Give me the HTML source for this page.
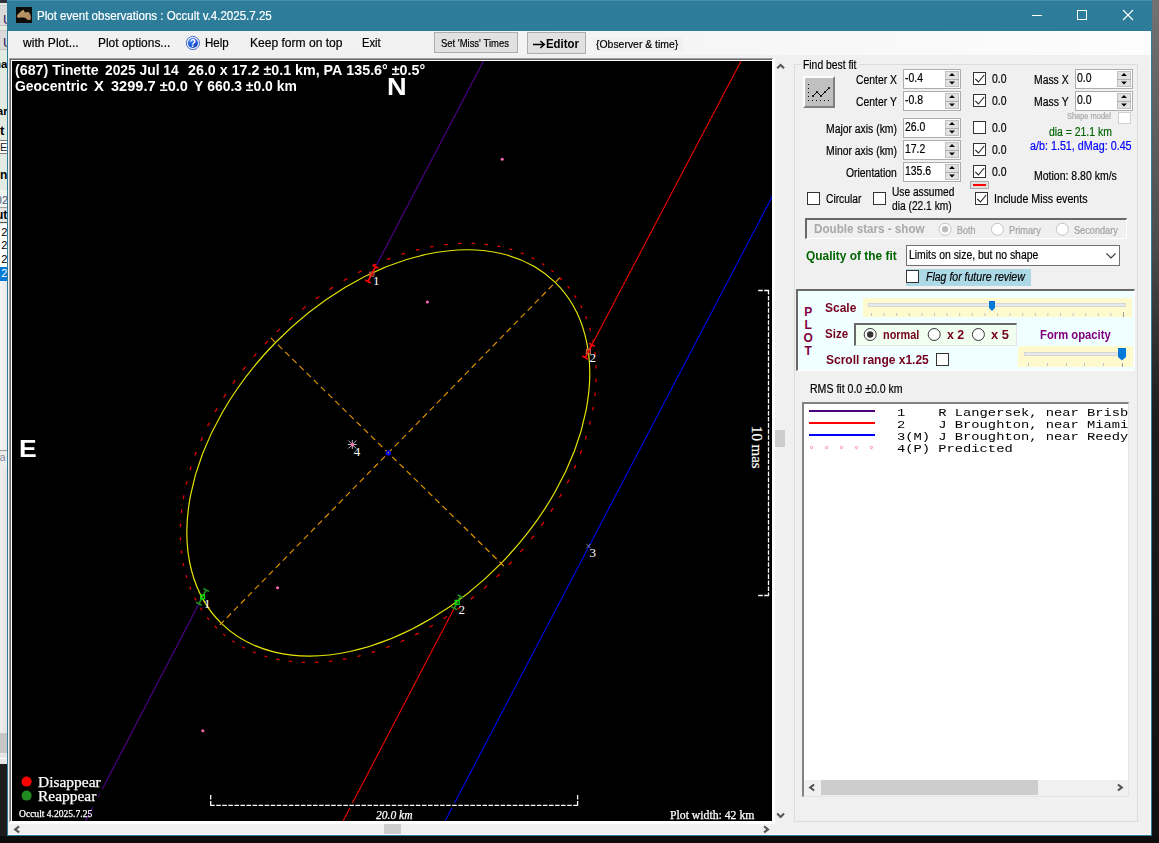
<!DOCTYPE html>
<html><head><meta charset="utf-8"><title>Plot event observations</title>
<style>
html,body{margin:0;padding:0;}
body{width:1159px;height:843px;overflow:hidden;background:#0c0c0c;position:relative;font-family:"Liberation Sans",sans-serif;}
.a{position:absolute;box-sizing:border-box;}
.t{position:absolute;white-space:nowrap;}
svg{position:absolute;left:0;top:0;overflow:visible;}
</style></head><body>
<div class="a" style="left:0px;top:0px;width:7px;height:843px;background:#e2ebe2;overflow:hidden;"><div class="a" style="left:0;top:0px;width:8px;height:3px;background:#30343a;"></div><div class="a" style="left:0;top:5px;width:8px;height:21px;background:#dadada;border-top:1px solid #c8c8c8;border-bottom:1px solid #c0c0c0;"></div><div class="a" style="left:0;top:30px;width:8px;height:20px;background:#dadada;border-top:1px solid #c8c8c8;border-bottom:1px solid #c0c0c0;"></div><span class='t' style="left:3.11px;top:10.50px;font:13px/17px 'Liberation Sans',sans-serif;color:#2a1a5a">U</span><span class='t' style="left:3.11px;top:33.50px;font:13px/17px 'Liberation Sans',sans-serif;color:#2a1a5a">U</span><span class='t' style="left:-6.02px;top:57.02px;font:bold 11.5px/15px 'Liberation Sans',sans-serif;color:#000">ha</span><span class='t' style="left:-3.27px;top:104.22px;font:bold 11.5px/15px 'Liberation Sans',sans-serif;color:#000">ar</span><span class='t' style="left:-0.13px;top:122.00px;font:bold 13px/17px 'Liberation Sans',sans-serif;color:#000">t</span><div class="a" style="left:0;top:140px;width:8px;height:14px;background:#fff;border-top:1px solid #7a7a7a;border-bottom:1px solid #7a7a7a;"></div><span class='t' style="left:-0.04px;top:140.19px;font:11px/15px 'Liberation Sans',sans-serif;color:#222">E</span><span class='t' style="left:0.07px;top:166.84px;font:bold 12px/16px 'Liberation Sans',sans-serif;color:#000">n</span><div class="a" style="left:0;top:190px;width:8px;height:18px;background:#f0f3ee;"></div><span class='t' style="left:-4.23px;top:192.69px;font:11px/15px 'Liberation Sans',sans-serif;color:#4a5878">02</span><div class="a" style="left:0;top:207px;width:8px;height:16px;background:#e6e6e6;border-top:1px solid #a0a0a0;border-bottom:1px solid #555;"></div><span class='t' style="left:-4.03px;top:207.24px;font:bold 12px/16px 'Liberation Sans',sans-serif;color:#000">ut</span><div class="a" style="left:0;top:224px;width:8px;height:43px;background:#fff;"></div><span class='t' style="left:1.18px;top:224.99px;font:11px/15px 'Liberation Sans',sans-serif;color:#000">2</span><span class='t' style="left:1.18px;top:238.49px;font:11px/15px 'Liberation Sans',sans-serif;color:#000">2</span><span class='t' style="left:1.18px;top:251.89px;font:11px/15px 'Liberation Sans',sans-serif;color:#000">2</span><div class="a" style="left:0;top:266.5px;width:8px;height:14.5px;background:#0078d7;"></div><span class='t' style="left:1.18px;top:266.19px;font:11px/15px 'Liberation Sans',sans-serif;color:#fff">2</span><div class="a" style="left:0;top:281px;width:8px;height:452px;background:linear-gradient(90deg,#f4f4f4,#e9e9e9);"></div><div class="a" style="left:0;top:449.5px;width:8px;height:1px;background:#9a9a9a;"></div><div class="a" style="left:0;top:450.5px;width:8px;height:16px;background:#ececec;"></div><span class='t' style="left:-0.62px;top:450.49px;font:11px/15px 'Liberation Sans',sans-serif;color:#8a8aa0">a</span><div class="a" style="left:0;top:466.5px;width:8px;height:267px;background:linear-gradient(90deg,#eeeeee,#e2e2e2);"></div><div class="a" style="left:0;top:733px;width:8px;height:20px;background:#c6c6c6;"></div><div class="a" style="left:0;top:753px;width:8px;height:11px;background:#e6e6e6;"></div><div class="a" style="left:0;top:757.5px;width:8px;height:1px;background:#fff;"></div><div class="a" style="left:0;top:764px;width:8px;height:80px;background:#1c1c1c;"></div></div>
<div class="a" style="left:7px;top:0px;width:1145px;height:836px;background:#f0f0f0;border:1px solid #2d7d9a;border-top:none;"></div>
<div class="a" style="left:7px;top:0px;width:1145px;height:31px;background:#2d7d9a;"></div>
<div class="a" style="left:1152px;top:0px;width:7px;height:843px;background:linear-gradient(180deg,#727272 0px,#646464 90px,#5a5a5a 160px,#4a4a4a 250px,#333 330px,#1c1c1c 420px,#101010 843px);"></div>
<div class="a" style="left:0px;top:836px;width:1159px;height:7px;background:#0d0d0d;"></div>
<div class="a" style="left:1150px;top:31px;width:1px;height:804px;background:#fafafa;"></div>
<div class="a" style="left:8px;top:834px;width:1143px;height:1px;background:#fafafa;"></div>
<div class="a" style="left:7px;top:0px;width:1145px;height:1px;background:#4a8faa;"></div>
<div class="a" style="left:16px;top:7px;width:16px;height:16px;background:#0e0c08;"></div>
<svg width="1159" height="843"><defs><filter id="ib" x="-20%" y="-20%" width="140%" height="140%"><feGaussianBlur stdDeviation="0.35"/></filter><linearGradient id="ig" x1="0" y1="0" x2="1" y2="1"><stop offset="0" stop-color="#c29c6c"/><stop offset="1" stop-color="#a88458"/></linearGradient></defs><path filter="url(#ib)" fill="url(#ig)" d="M16.9 16.3 C17.1 15.3 17.4 14.9 17.8 14.4 C18.8 13.3 19.7 12.6 20.6 11.8 C21.2 11.2 21.8 10.6 22.4 10.2 C22.9 9.9 23.4 9.9 23.7 10.1 C24.1 10.5 24.2 11.1 24.4 11.6 C24.7 12.1 25.1 12.6 25.6 12.6 C26.2 12.5 26.8 12.0 27.4 11.9 C28.0 11.8 28.6 12.0 29.0 12.4 C29.6 13.0 30.0 13.7 30.3 14.5 C30.6 15.5 30.8 16.5 30.9 17.6 C30.95 18.3 30.9 19.0 30.6 19.4 C30.2 19.9 29.6 20.1 29.0 20.0 C28.3 19.9 27.7 19.7 27.1 19.4 C26.5 19.0 26.1 18.5 25.6 18.1 C25.0 17.6 24.3 17.45 23.5 17.45 C22.5 17.45 21.6 17.55 20.6 17.6 C19.8 17.7 19.0 17.9 18.3 17.8 C17.6 17.7 16.9 17.2 16.9 16.3Z"/></svg>
<span class="t" style="left:37.20px;top:9.00px;font:12px/14px 'Liberation Sans',sans-serif;color:#fff;transform-origin:0 0;transform:scaleX(0.9626);-webkit-text-stroke:0.2px #fff;">Plot&nbsp;event&nbsp;observations&nbsp;:&nbsp;Occult&nbsp;v.4.2025.7.25</span>
<svg width="1159" height="843" shape-rendering="crispEdges"><path d="M1032 15.5h10" stroke="#fff" fill="none"/><rect x="1077.5" y="10.5" width="9" height="9" stroke="#fff" fill="none"/></svg>
<svg width="1159" height="843"><path d="M1123 10l10 10M1133 10l-10 10" stroke="#fff" stroke-width="1.1" fill="none"/></svg>
<div class="a" style="left:8px;top:31px;width:1143px;height:24px;background:linear-gradient(90deg,#f0f0f0 0%,#f2f2f2 40%,#fdfdfd 100%);"></div>
<span class="t" style="left:23.00px;top:36.00px;font:12px/14px 'Liberation Sans',sans-serif;color:#000;transform-origin:0 0;transform:scaleX(1.0063);-webkit-text-stroke:0.2px #000;">with&nbsp;Plot...</span>
<span class="t" style="left:98.20px;top:36.00px;font:12px/14px 'Liberation Sans',sans-serif;color:#000;transform-origin:0 0;transform:scaleX(0.9944);-webkit-text-stroke:0.2px #000;">Plot&nbsp;options...</span>
<span class="t" style="left:204.50px;top:36.00px;font:12px/14px 'Liberation Sans',sans-serif;color:#000;transform-origin:0 0;transform:scaleX(0.9603);-webkit-text-stroke:0.2px #000;">Help</span>
<span class="t" style="left:250.00px;top:36.00px;font:12px/14px 'Liberation Sans',sans-serif;color:#000;transform-origin:0 0;transform:scaleX(1.0048);-webkit-text-stroke:0.2px #000;">Keep&nbsp;form&nbsp;on&nbsp;top</span>
<span class="t" style="left:362.00px;top:36.00px;font:12px/14px 'Liberation Sans',sans-serif;color:#000;transform-origin:0 0;transform:scaleX(0.9348);-webkit-text-stroke:0.2px #000;">Exit</span>
<svg width="1159" height="843"><defs><linearGradient id="hg" x1="0.2" y1="0" x2="0.8" y2="1"><stop offset="0" stop-color="#5a90f8"/><stop offset="0.5" stop-color="#2460e0"/><stop offset="1" stop-color="#0c3cb0"/></linearGradient></defs><circle cx="192.9" cy="43" r="6.6" fill="#eef2fc" stroke="#3a60c0" stroke-width="0.9"/><circle cx="192.9" cy="43" r="5.1" fill="url(#hg)"/><text x="192.9" y="46.6" font-family="Liberation Sans" font-weight="bold" font-size="10" fill="#fff" text-anchor="middle">?</text></svg>
<div class="a" style="left:434px;top:32px;width:84px;height:21px;background:#e1e1e1;border:1px solid #adadad;"></div>
<span class="t" style="left:440.70px;top:37.00px;font:10.5px/12px 'Liberation Sans',sans-serif;color:#000;transform-origin:0 0;transform:scaleX(0.9017);-webkit-text-stroke:0.2px #000;">Set&nbsp;'Miss'&nbsp;Times</span>
<div class="a" style="left:527px;top:32px;width:59px;height:22px;background:#e1e1e1;border:1px solid #adadad;"></div>
<span class="t" style="left:545.60px;top:36.00px;font:bold 13px/15px 'Liberation Sans',sans-serif;color:#000;transform-origin:0 0;transform:scaleX(0.8787);">Editor</span>
<svg width="1159" height="843"><path d="M533 44.5H544M540.3 41l4 3.5l-4 3.5" fill="none" stroke="#000" stroke-width="1.5"/></svg>
<div class="a" style="left:593.6px;top:38px;width:88px;height:13px;background:#f0f0f0;"></div>
<span class="t" style="left:596.00px;top:38.00px;font:11.5px/12px 'Liberation Sans',sans-serif;color:#000;transform-origin:0 0;transform:scaleX(0.9067);-webkit-text-stroke:0.2px #000;">{Observer&nbsp;&amp;&nbsp;time}</span>
<div class="a" style="left:9px;top:58px;width:766px;height:766px;background:#fff;"></div>
<div class="a" style="left:9px;top:58px;width:764px;height:1px;background:#a0a0a0;"></div>
<div class="a" style="left:9px;top:58px;width:1px;height:764px;background:#a0a0a0;"></div>
<div class="a" style="left:10px;top:59px;width:762px;height:1px;background:#696969;"></div>
<div class="a" style="left:10px;top:59px;width:1px;height:762px;background:#696969;"></div>
<div class="a" style="left:12px;top:61px;width:760px;height:760px;background:#000;"></div>
<svg width="1159" height="843"><defs><clipPath id="pc"><rect x="12" y="61" width="760" height="760"/></clipPath></defs><g clip-path="url(#pc)" fill="none"><path d="M489.26 50.00L371.80 274.05M202.60 596.80L80.88 830.00" stroke="#4e0086" stroke-width="1.15"/><path d="M746.86 50.00L588.40 351.40M457.20 602.40L338.39 830.00" stroke="#f00000" stroke-width="1.1"/><path d="M849.01 50.00L440.38 830.00" stroke="#0000fa" stroke-width="1.05"/><rect x="93" y="789.3" width="14" height="4.3" fill="#000"/><rect x="88" y="797" width="15" height="10.2" fill="#000"/><g transform="rotate(-45.6 388.3 452.9)"><path d="M633.50 452.90L633.46 455.77M632.90 464.37L632.57 467.23M631.11 475.78L630.48 478.62M628.14 487.08L627.22 489.88M624.00 498.21L622.79 500.97M618.71 509.13L617.21 511.82M612.30 519.77L610.53 522.38M604.80 530.08L602.76 532.60M596.24 540.02L593.94 542.44M586.67 549.53L584.13 551.84M576.13 558.57L573.35 560.76M564.68 567.10L561.68 569.15M552.37 575.07L549.17 576.97M539.26 582.45L535.87 584.20M525.41 589.19L521.85 590.78M510.90 595.27L507.18 596.69M495.79 600.66L491.93 601.90M480.15 605.33L476.17 606.38M464.07 609.25L459.99 610.12M447.62 612.42L443.46 613.09M430.88 614.80L426.66 615.28M413.93 616.40L409.67 616.67M396.86 617.20L392.58 617.27M379.74 617.20L375.47 617.07M362.67 616.40L358.42 616.07M345.72 614.80L341.51 614.28M328.98 612.42L324.84 611.70M312.53 609.25L308.47 608.34M296.45 605.33L292.49 604.23M280.81 600.66L276.98 599.38M265.70 595.27L262.01 593.82M251.19 589.19L247.66 587.57M237.34 582.45L233.99 580.66M224.23 575.07L221.07 573.13M211.92 567.10L208.97 565.02M200.47 558.57L197.74 556.36M189.93 549.53L187.44 547.20M180.36 540.02L178.12 537.57M171.80 530.08L169.83 527.54M164.30 519.77L162.59 517.14M157.89 509.13L156.46 506.42M152.60 498.21L151.45 495.45M148.46 487.08L147.61 484.27M145.49 475.78L144.93 472.94M143.70 464.37L143.44 461.50M143.10 452.90L143.14 450.03M143.70 441.43L144.03 438.57M145.49 430.02L146.12 427.18M148.46 418.72L149.38 415.92M152.60 407.59L153.81 404.83M157.89 396.67L159.39 393.98M164.30 386.03L166.07 383.42M171.80 375.72L173.84 373.20M180.36 365.78L182.66 363.36M189.93 356.27L192.47 353.96M200.47 347.23L203.25 345.04M211.92 338.70L214.92 336.65M224.23 330.73L227.43 328.83M237.34 323.35L240.73 321.60M251.19 316.61L254.75 315.02M265.70 310.53L269.42 309.11M280.81 305.14L284.67 303.90M296.45 300.47L300.43 299.42M312.53 296.55L316.61 295.68M328.98 293.38L333.14 292.71M345.72 291.00L349.94 290.52M362.67 289.40L366.93 289.13M379.74 288.60L384.02 288.53M396.86 288.60L401.13 288.73M413.93 289.40L418.18 289.73M430.88 291.00L435.09 291.52M447.62 293.38L451.76 294.10M464.07 296.55L468.13 297.46M480.15 300.47L484.11 301.57M495.79 305.14L499.62 306.42M510.90 310.53L514.59 311.98M525.41 316.61L528.94 318.23M539.26 323.35L542.61 325.14M552.37 330.73L555.53 332.67M564.68 338.70L567.63 340.78M576.13 347.23L578.86 349.44M586.67 356.27L589.16 358.60M596.24 365.78L598.48 368.23M604.80 375.72L606.77 378.26M612.30 386.03L614.01 388.66M618.71 396.67L620.14 399.38M624.00 407.59L625.15 410.35M628.14 418.72L628.99 421.53M631.11 430.02L631.67 432.86M632.90 441.43L633.16 444.30" stroke="#e80000" stroke-width="1.25"/><ellipse cx="388.3" cy="452.9" rx="238.6" ry="157.8" stroke="#e4e400" stroke-width="1.2"/><path d="M633.5 452.9H143.10000000000002M388.3 288.5V617.3" stroke="#e09200" stroke-width="1.15" stroke-dasharray="6 4"/></g><circle cx="388.3" cy="452.9" r="2.6" fill="#0000ff"/><circle cx="388.3" cy="452.9" r="0.8" fill="#c87800"/><circle cx="502.2" cy="159.3" r="1.5" fill="#ff69b4"/><circle cx="427.4" cy="302.1" r="1.5" fill="#ff69b4"/><circle cx="352.5" cy="445.0" r="1.5" fill="#ff69b4"/><circle cx="277.6" cy="587.8" r="1.5" fill="#ff69b4"/><circle cx="202.8" cy="730.7" r="1.5" fill="#ff69b4"/><path d="M347.8 444.5h9M352.3 440.0v9M348.3 440.5l8 8M348.3 448.5l8 -8" stroke="#d8d8e2" stroke-width="0.85"/><circle cx="352.3" cy="444.5" r="1.6" fill="#ff69b4"/><path d="M375.65 266.70L367.95 281.40M378.49 268.18L372.82 265.21M370.78 282.89L365.11 279.92" stroke="#ff0000" stroke-width="1.7"/><rect x="369.8" y="272.1" width="4" height="4" stroke="#c8503c" stroke-width="1.2"/><path d="M591.88 344.76L585.15 357.60M594.72 346.24L589.05 343.27M587.99 359.09L582.32 356.12" stroke="#ff0000" stroke-width="1.7"/><rect x="586.4" y="349.4" width="4" height="4" stroke="#c8503c" stroke-width="1.2"/><path d="M206.17 589.98L198.93 603.80M209.01 591.46L203.34 588.49M201.77 605.28L196.10 602.31" stroke="#228b22" stroke-width="1.7"/><rect x="200.6" y="594.8" width="4" height="4" stroke="#00e000" stroke-width="1.2"/><path d="M460.45 596.20L454.18 608.16M463.28 597.68L457.61 594.71M457.02 609.64L451.35 606.67" stroke="#228b22" stroke-width="1.7"/><rect x="455.2" y="600.4" width="4" height="4" stroke="#00e000" stroke-width="1.2"/><path d="M586.3 543.8l4.4 4.4M590.7 543.8l-4.4 4.4" stroke="#a0a0b8" stroke-width="0.8"/><rect x="208" y="803" width="372" height="5" fill="#000"/><path d="M210.7 795V805.6M210.2 805.4H578M577.6 795V805.6" stroke="#fff" stroke-width="1.3" stroke-dasharray="4.55 1.5"/><path d="M758.2 290.5H769.1M768.5 290V596M758.2 595.5H769.1" stroke="#fff" stroke-width="1.3" stroke-dasharray="4.55 1.5"/><circle cx="26.6" cy="781.6" r="5" fill="#ff0000"/><circle cx="26.6" cy="795.6" r="5" fill="#228b22"/></g></svg>
<span class="t" style="left:15.10px;top:62.00px;font:bold 14px/16px 'Liberation Sans',sans-serif;color:#fff;transform-origin:0 0;transform:scaleX(1.0180);">(687)&nbsp;Tinette</span>
<span class="t" style="left:104.90px;top:62.00px;font:bold 14px/16px 'Liberation Sans',sans-serif;color:#fff;transform-origin:0 0;transform:scaleX(0.9862);">2025&nbsp;Jul&nbsp;14</span>
<span class="t" style="left:188.20px;top:62.00px;font:bold 14px/16px 'Liberation Sans',sans-serif;color:#fff;transform-origin:0 0;transform:scaleX(1.0195);">26.0&nbsp;x&nbsp;17.2&nbsp;±0.1&nbsp;km,&nbsp;PA&nbsp;135.6°&nbsp;±0.5°</span>
<span class="t" style="left:15.10px;top:78.00px;font:bold 14px/16px 'Liberation Sans',sans-serif;color:#fff;transform-origin:0 0;transform:scaleX(0.9939);">Geocentric</span>
<span class="t" style="left:94.10px;top:78.00px;font:bold 14px/16px 'Liberation Sans',sans-serif;color:#fff;transform-origin:0 0;transform:scaleX(1.0602);">X</span>
<span class="t" style="left:110.60px;top:78.00px;font:bold 14px/16px 'Liberation Sans',sans-serif;color:#fff;transform-origin:0 0;transform:scaleX(1.0411);">3299.7&nbsp;±0.0</span>
<span class="t" style="left:194.10px;top:78.00px;font:bold 14px/16px 'Liberation Sans',sans-serif;color:#fff;transform-origin:0 0;transform:scaleX(0.9944);">Y&nbsp;660.3&nbsp;±0.0&nbsp;km</span>
<span class="t" style="left:387.36px;top:73.00px;font:bold 24px/27px 'Liberation Sans',sans-serif;color:#fff;transform-origin:0 0;transform:scaleX(1.1327);">N</span>
<span class="t" style="left:19.41px;top:435.00px;font:bold 24px/27px 'Liberation Sans',sans-serif;color:#fff;transform-origin:0 0;transform:scaleX(1.1037);">E</span>
<span class="t" style="left:38.20px;top:774.00px;font:15px/16px 'Liberation Serif',serif;color:#fff;transform-origin:0 0;transform:scaleX(1.0311);-webkit-text-stroke:0.25px #fff;">Disappear</span>
<span class="t" style="left:38.20px;top:788.00px;font:15px/16px 'Liberation Serif',serif;color:#fff;transform-origin:0 0;transform:scaleX(1.0294);-webkit-text-stroke:0.25px #fff;">Reappear</span>
<span class="t" style="left:19.10px;top:809.00px;font:9.5px/10px 'Liberation Serif',serif;color:#fff;transform-origin:0 0;transform:scaleX(1.0052);-webkit-text-stroke:0.25px #fff;">Occult&nbsp;4.2025.7.25</span>
<span class="t" style="left:375.50px;top:808.00px;font:italic 12px/14px 'Liberation Serif',serif;color:#fff;transform-origin:0 0;transform:scaleX(0.9607);-webkit-text-stroke:0.25px #fff;">20.0&nbsp;km</span>
<span class="t" style="left:669.90px;top:808.00px;font:12px/14px 'Liberation Serif',serif;color:#fff;transform-origin:0 0;transform:scaleX(0.9775);-webkit-text-stroke:0.25px #fff;">Plot&nbsp;width:&nbsp;42&nbsp;km</span>
<span class="t" style="left:373.00px;top:273.00px;font:13px/15px 'Liberation Serif',serif;color:#fff;">1</span>
<span class="t" style="left:589.50px;top:350.00px;font:13px/15px 'Liberation Serif',serif;color:#fff;">2</span>
<span class="t" style="left:203.90px;top:596.00px;font:13px/15px 'Liberation Serif',serif;color:#fff;">1</span>
<span class="t" style="left:458.60px;top:602.00px;font:13px/15px 'Liberation Serif',serif;color:#fff;">2</span>
<span class="t" style="left:589.40px;top:545.00px;font:13px/15px 'Liberation Serif',serif;color:#fff;">3</span>
<span class="t" style="left:353.80px;top:444.00px;font:13px/15px 'Liberation Serif',serif;color:#fff;">4</span>
<span class="t" style="left:749.4px;top:426.3px;font:15px/15px 'Liberation Serif',serif;color:#fff;-webkit-text-stroke:0.2px #fff;transform-origin:0 0;transform:translate(15px,0) rotate(90deg);letter-spacing:-0.05px">10&nbsp;mas</span>
<svg width="1159" height="843"><g fill="none" stroke="#555" stroke-width="2.1" stroke-linejoin="miter"><path d="M777.2 68.30000000000001L780.6 64.9L784.0 68.30000000000001"/><path d="M777.2 813.5L780.6 816.9L784.0 813.5"/><path d="M19.099999999999998 826.4L15.2 829.4L19.099999999999998 832.4"/><path d="M764.1 826.4L768.0 829.4L764.1 832.4"/></g></svg>
<div class="a" style="left:775px;top:430px;width:10px;height:17px;background:#cdcdcd;"></div>
<div class="a" style="left:384px;top:824px;width:17px;height:10px;background:#cdcdcd;"></div>
<div class="a" style="left:794px;top:64px;width:344px;height:758px;border:1px solid #dcdcdc;"></div>
<div class="a" style="left:801px;top:58px;width:58px;height:14px;background:#f0f0f0;"></div>
<span class="t" style="left:803.00px;top:58.00px;font:12px/14px 'Liberation Sans',sans-serif;color:#000;transform-origin:0 0;transform:scaleX(0.8625);-webkit-text-stroke:0.2px #000;">Find&nbsp;best&nbsp;fit</span>
<div class="a" style="left:803px;top:76px;width:32px;height:32px;background:#c0c0c0;border-style:solid;border-width:2px;border-color:#fff #808080 #808080 #fff;"></div>
<svg width="1159" height="843"><g fill="#000"><path d="M813 96l4-4l4 4l4-4l4-4" fill="none" stroke="#000" stroke-width="1"/><circle cx="813" cy="96" r="1.05"/><circle cx="817" cy="92" r="1.05"/><circle cx="821" cy="96" r="1.05"/><circle cx="825" cy="92" r="1.05"/><circle cx="829" cy="88" r="1.05"/><rect x="808" y="84" width="1" height="1" fill="#000"/><rect x="808" y="88" width="1" height="1" fill="#000"/><rect x="808" y="92" width="1" height="1" fill="#000"/><rect x="808" y="96" width="1" height="1" fill="#000"/><rect x="808" y="100" width="1" height="1" fill="#000"/><rect x="812" y="100" width="1" height="1" fill="#000"/><rect x="816" y="100" width="1" height="1" fill="#000"/><rect x="820" y="100" width="1" height="1" fill="#000"/><rect x="824" y="100" width="1" height="1" fill="#000"/><rect x="828" y="100" width="1" height="1" fill="#000"/></g></svg>
<span class="t" style="left:855.54px;top:73.00px;font:12px/14px 'Liberation Sans',sans-serif;color:#000;transform-origin:0 0;transform:scaleX(0.8650);-webkit-text-stroke:0.2px #000;">Center&nbsp;X</span>
<div class="a" style="left:903px;top:69px;width:58px;height:20px;background:#fff;border:1px solid #abadb3;"></div>
<div class="a" style="left:945px;top:71px;width:14px;height:16px;background:#e1e1e1;border:1px solid #c0c0c0;"></div>
<div class="a" style="left:945px;top:78.5px;width:14px;height:1px;background:#adadad;"></div>
<svg width="1159" height="843"><path d="M949.1 76.0L952 73.0L954.9 76.0ZM949.1 81.6L952 84.6L954.9 81.6Z" fill="#000"/></svg>
<span class="t" style="left:904.80px;top:71.00px;font:12px/14px 'Liberation Sans',sans-serif;color:#000;transform-origin:0 0;transform:scaleX(0.8700);-webkit-text-stroke:0.2px #000;">-0.4</span>
<div class="a" style="left:973px;top:72px;width:13px;height:13px;background:#fff;border:1px solid #333;"></div>
<svg width="1159" height="843"><path d="M975.3 78.8L978.4 82L984.2 75" fill="none" stroke="#222" stroke-width="1.15"/></svg>
<span class="t" style="left:992.30px;top:72.00px;font:12px/14px 'Liberation Sans',sans-serif;color:#000;transform-origin:0 0;transform:scaleX(0.8692);-webkit-text-stroke:0.2px #000;">0.0</span>
<span class="t" style="left:855.73px;top:95.00px;font:12px/14px 'Liberation Sans',sans-serif;color:#000;transform-origin:0 0;transform:scaleX(0.8650);-webkit-text-stroke:0.2px #000;">Center&nbsp;Y</span>
<div class="a" style="left:903px;top:91px;width:58px;height:20px;background:#fff;border:1px solid #abadb3;"></div>
<div class="a" style="left:945px;top:93px;width:14px;height:16px;background:#e1e1e1;border:1px solid #c0c0c0;"></div>
<div class="a" style="left:945px;top:100.5px;width:14px;height:1px;background:#adadad;"></div>
<svg width="1159" height="843"><path d="M949.1 98.0L952 95.0L954.9 98.0ZM949.1 103.6L952 106.6L954.9 103.6Z" fill="#000"/></svg>
<span class="t" style="left:904.80px;top:93.00px;font:12px/14px 'Liberation Sans',sans-serif;color:#000;transform-origin:0 0;transform:scaleX(0.8700);-webkit-text-stroke:0.2px #000;">-0.8</span>
<div class="a" style="left:973px;top:94px;width:13px;height:13px;background:#fff;border:1px solid #333;"></div>
<svg width="1159" height="843"><path d="M975.3 100.8L978.4 104L984.2 97" fill="none" stroke="#222" stroke-width="1.15"/></svg>
<span class="t" style="left:992.30px;top:94.00px;font:12px/14px 'Liberation Sans',sans-serif;color:#000;transform-origin:0 0;transform:scaleX(0.8692);-webkit-text-stroke:0.2px #000;">0.0</span>
<span class="t" style="left:825.57px;top:122.00px;font:12px/14px 'Liberation Sans',sans-serif;color:#000;transform-origin:0 0;transform:scaleX(0.8650);-webkit-text-stroke:0.2px #000;">Major&nbsp;axis&nbsp;(km)</span>
<div class="a" style="left:903px;top:118px;width:58px;height:20px;background:#fff;border:1px solid #abadb3;"></div>
<div class="a" style="left:945px;top:120px;width:14px;height:16px;background:#e1e1e1;border:1px solid #c0c0c0;"></div>
<div class="a" style="left:945px;top:127.5px;width:14px;height:1px;background:#adadad;"></div>
<svg width="1159" height="843"><path d="M949.1 125.0L952 122.0L954.9 125.0ZM949.1 130.6L952 133.6L954.9 130.6Z" fill="#000"/></svg>
<span class="t" style="left:904.80px;top:120.00px;font:12px/14px 'Liberation Sans',sans-serif;color:#000;transform-origin:0 0;transform:scaleX(0.8700);-webkit-text-stroke:0.2px #000;">26.0</span>
<div class="a" style="left:973px;top:121px;width:13px;height:13px;background:#fff;border:1px solid #333;"></div>
<span class="t" style="left:992.30px;top:121.00px;font:12px/14px 'Liberation Sans',sans-serif;color:#000;transform-origin:0 0;transform:scaleX(0.8692);-webkit-text-stroke:0.2px #000;">0.0</span>
<span class="t" style="left:825.57px;top:144.00px;font:12px/14px 'Liberation Sans',sans-serif;color:#000;transform-origin:0 0;transform:scaleX(0.8650);-webkit-text-stroke:0.2px #000;">Minor&nbsp;axis&nbsp;(km)</span>
<div class="a" style="left:903px;top:140px;width:58px;height:20px;background:#fff;border:1px solid #abadb3;"></div>
<div class="a" style="left:945px;top:142px;width:14px;height:16px;background:#e1e1e1;border:1px solid #c0c0c0;"></div>
<div class="a" style="left:945px;top:149.5px;width:14px;height:1px;background:#adadad;"></div>
<svg width="1159" height="843"><path d="M949.1 147.0L952 144.0L954.9 147.0ZM949.1 152.6L952 155.6L954.9 152.6Z" fill="#000"/></svg>
<span class="t" style="left:904.80px;top:142.00px;font:12px/14px 'Liberation Sans',sans-serif;color:#000;transform-origin:0 0;transform:scaleX(0.8700);-webkit-text-stroke:0.2px #000;">17.2</span>
<div class="a" style="left:973px;top:143px;width:13px;height:13px;background:#fff;border:1px solid #333;"></div>
<svg width="1159" height="843"><path d="M975.3 149.8L978.4 153L984.2 146" fill="none" stroke="#222" stroke-width="1.15"/></svg>
<span class="t" style="left:992.30px;top:143.00px;font:12px/14px 'Liberation Sans',sans-serif;color:#000;transform-origin:0 0;transform:scaleX(0.8692);-webkit-text-stroke:0.2px #000;">0.0</span>
<span class="t" style="left:845.73px;top:166.00px;font:12px/14px 'Liberation Sans',sans-serif;color:#000;transform-origin:0 0;transform:scaleX(0.8650);-webkit-text-stroke:0.2px #000;">Orientation</span>
<div class="a" style="left:903px;top:162px;width:58px;height:20px;background:#fff;border:1px solid #abadb3;"></div>
<div class="a" style="left:945px;top:164px;width:14px;height:16px;background:#e1e1e1;border:1px solid #c0c0c0;"></div>
<div class="a" style="left:945px;top:171.5px;width:14px;height:1px;background:#adadad;"></div>
<svg width="1159" height="843"><path d="M949.1 169.0L952 166.0L954.9 169.0ZM949.1 174.6L952 177.6L954.9 174.6Z" fill="#000"/></svg>
<span class="t" style="left:904.80px;top:164.00px;font:12px/14px 'Liberation Sans',sans-serif;color:#000;transform-origin:0 0;transform:scaleX(0.8700);-webkit-text-stroke:0.2px #000;">135.6</span>
<div class="a" style="left:973px;top:165px;width:13px;height:13px;background:#fff;border:1px solid #333;"></div>
<svg width="1159" height="843"><path d="M975.3 171.8L978.4 175L984.2 168" fill="none" stroke="#222" stroke-width="1.15"/></svg>
<span class="t" style="left:992.30px;top:165.00px;font:12px/14px 'Liberation Sans',sans-serif;color:#000;transform-origin:0 0;transform:scaleX(0.8692);-webkit-text-stroke:0.2px #000;">0.0</span>
<span class="t" style="left:1034.20px;top:73.00px;font:12px/14px 'Liberation Sans',sans-serif;color:#000;transform-origin:0 0;transform:scaleX(0.8648);-webkit-text-stroke:0.2px #000;">Mass&nbsp;X</span>
<span class="t" style="left:1034.20px;top:95.00px;font:12px/14px 'Liberation Sans',sans-serif;color:#000;transform-origin:0 0;transform:scaleX(0.8695);-webkit-text-stroke:0.2px #000;">Mass&nbsp;Y</span>
<div class="a" style="left:1075px;top:69px;width:58px;height:20px;background:#fff;border:1px solid #abadb3;"></div>
<div class="a" style="left:1117px;top:71px;width:14px;height:16px;background:#e1e1e1;border:1px solid #c0c0c0;"></div>
<div class="a" style="left:1117px;top:78.5px;width:14px;height:1px;background:#adadad;"></div>
<svg width="1159" height="843"><path d="M1121.1 76.0L1124 73.0L1126.9 76.0ZM1121.1 81.6L1124 84.6L1126.9 81.6Z" fill="#000"/></svg>
<span class="t" style="left:1076.80px;top:71.00px;font:12px/14px 'Liberation Sans',sans-serif;color:#000;transform-origin:0 0;transform:scaleX(0.8700);-webkit-text-stroke:0.2px #000;">0.0</span>
<div class="a" style="left:1075px;top:91px;width:58px;height:20px;background:#fff;border:1px solid #abadb3;"></div>
<div class="a" style="left:1117px;top:93px;width:14px;height:16px;background:#e1e1e1;border:1px solid #c0c0c0;"></div>
<div class="a" style="left:1117px;top:100.5px;width:14px;height:1px;background:#adadad;"></div>
<svg width="1159" height="843"><path d="M1121.1 98.0L1124 95.0L1126.9 98.0ZM1121.1 103.6L1124 106.6L1126.9 103.6Z" fill="#000"/></svg>
<span class="t" style="left:1076.80px;top:93.00px;font:12px/14px 'Liberation Sans',sans-serif;color:#000;transform-origin:0 0;transform:scaleX(0.8700);-webkit-text-stroke:0.2px #000;">0.0</span>
<span class="t" style="left:1067.00px;top:111.00px;font:9px/10px 'Liberation Sans',sans-serif;color:#a9a9a9;transform-origin:0 0;transform:scaleX(0.8257);-webkit-text-stroke:0.2px #a9a9a9;">Shape&nbsp;model</span>
<div class="a" style="left:1118px;top:112px;width:13px;height:12px;background:#fff;border:1px solid #d0d0d0;"></div>
<span class="t" style="left:1049.20px;top:125.00px;font:12px/14px 'Liberation Sans',sans-serif;color:#006400;transform-origin:0 0;transform:scaleX(0.8677);-webkit-text-stroke:0.2px #006400;">dia&nbsp;=&nbsp;21.1&nbsp;km</span>
<span class="t" style="left:1030.00px;top:139.00px;font:12px/14px 'Liberation Sans',sans-serif;color:#0000ff;transform-origin:0 0;transform:scaleX(0.8958);-webkit-text-stroke:0.2px #0000ff;">a/b:&nbsp;1.51,&nbsp;dMag:&nbsp;0.45</span>
<span class="t" style="left:1034.20px;top:169.00px;font:12px/14px 'Liberation Sans',sans-serif;color:#000;transform-origin:0 0;transform:scaleX(0.8743);-webkit-text-stroke:0.2px #000;">Motion:&nbsp;8.80&nbsp;km/s</span>
<div class="a" style="left:970px;top:181px;width:19px;height:8px;background:#e1e1e1;border:1px solid #adadad;"></div>
<div class="a" style="left:973px;top:184px;width:13px;height:2px;background:#ff0000;"></div>
<div class="a" style="left:807px;top:192px;width:13px;height:13px;background:#fff;border:1px solid #333;"></div>
<span class="t" style="left:825.60px;top:192.00px;font:12px/14px 'Liberation Sans',sans-serif;color:#000;transform-origin:0 0;transform:scaleX(0.8539);-webkit-text-stroke:0.2px #000;">Circular</span>
<div class="a" style="left:873px;top:192px;width:13px;height:13px;background:#fff;border:1px solid #333;"></div>
<span class="t" style="left:892.00px;top:185.00px;font:12px/14px 'Liberation Sans',sans-serif;color:#000;transform-origin:0 0;transform:scaleX(0.8492);-webkit-text-stroke:0.2px #000;">Use&nbsp;assumed</span>
<span class="t" style="left:892.00px;top:199.00px;font:12px/14px 'Liberation Sans',sans-serif;color:#000;transform-origin:0 0;transform:scaleX(0.8525);-webkit-text-stroke:0.2px #000;">dia&nbsp;(22.1&nbsp;km)</span>
<div class="a" style="left:975px;top:192px;width:13px;height:13px;background:#fff;border:1px solid #333;"></div>
<svg width="1159" height="843"><path d="M977.3 198.8L980.4 202L986.2 195" fill="none" stroke="#222" stroke-width="1.15"/></svg>
<span class="t" style="left:993.90px;top:192.00px;font:12px/14px 'Liberation Sans',sans-serif;color:#000;transform-origin:0 0;transform:scaleX(0.8873);-webkit-text-stroke:0.2px #000;">Include&nbsp;Miss&nbsp;events</span>
<div class="a" style="left:805px;top:218px;width:322px;height:21px;background:#f0f0f0;border-style:solid;border-width:2px 1px 1px 2px;border-color:#696969 #fff #fff #696969;"></div>
<span class="t" style="left:813.70px;top:222.00px;font:bold 12px/14px 'Liberation Sans',sans-serif;color:#a8a8a8;transform-origin:0 0;transform:scaleX(0.9700);">Double&nbsp;stars&nbsp;-&nbsp;show</span>
<svg width="1159" height="843"><circle cx="945.1" cy="229.3" r="6" fill="#fff" stroke="#c4c4c4" stroke-width="1"/><circle cx="945.1" cy="229.3" r="3.2" fill="#bdbdbd"/></svg>
<span class="t" style="left:957.10px;top:224.00px;font:11px/12px 'Liberation Sans',sans-serif;color:#a0a0a0;transform-origin:0 0;transform:scaleX(0.8131);-webkit-text-stroke:0.2px #a0a0a0;">Both</span>
<svg width="1159" height="843"><circle cx="997.4" cy="229.3" r="6" fill="#fff" stroke="#c4c4c4" stroke-width="1"/></svg>
<span class="t" style="left:1008.90px;top:224.00px;font:11px/12px 'Liberation Sans',sans-serif;color:#a0a0a0;transform-origin:0 0;transform:scaleX(0.8393);-webkit-text-stroke:0.2px #a0a0a0;">Primary</span>
<svg width="1159" height="843"><circle cx="1062.3" cy="229.3" r="6" fill="#fff" stroke="#c4c4c4" stroke-width="1"/></svg>
<span class="t" style="left:1073.90px;top:224.00px;font:11px/12px 'Liberation Sans',sans-serif;color:#a0a0a0;transform-origin:0 0;transform:scaleX(0.8329);-webkit-text-stroke:0.2px #a0a0a0;">Secondary</span>
<span class="t" style="left:805.80px;top:249.00px;font:bold 12px/14px 'Liberation Sans',sans-serif;color:#006400;transform-origin:0 0;transform:scaleX(0.9931);">Quality&nbsp;of&nbsp;the&nbsp;fit</span>
<div class="a" style="left:906px;top:245px;width:214px;height:21px;background:#fff;border:1px solid #707070;"></div>
<span class="t" style="left:909.20px;top:248.00px;font:12px/14px 'Liberation Sans',sans-serif;color:#000;transform-origin:0 0;transform:scaleX(0.8692);-webkit-text-stroke:0.2px #000;">Limits&nbsp;on&nbsp;size,&nbsp;but&nbsp;no&nbsp;shape</span>
<svg width="1159" height="843"><path d="M1106.5 253.5l4.5 4.5l4.5-4.5" fill="none" stroke="#333" stroke-width="1.1"/></svg>
<div class="a" style="left:906px;top:269px;width:125px;height:17px;background:#add8e6;"></div>
<div class="a" style="left:906px;top:270px;width:13px;height:13px;background:#fff;border:1px solid #333;"></div>
<span class="t" style="left:926.00px;top:270.00px;font:italic 12px/14px 'Liberation Sans',sans-serif;color:#000;transform-origin:0 0;transform:scaleX(0.8766);-webkit-text-stroke:0.2px #000;">Flag&nbsp;for&nbsp;future&nbsp;review</span>
<div class="a" style="left:796px;top:289px;width:339px;height:82px;background:#f0ffff;border-style:solid;border-width:2px 1px 1px 2px;border-color:#696969 #fff #fff #696969;"></div>
<span class="t" style="left:804.20px;top:305.00px;font:bold 12px/14px 'Liberation Sans',sans-serif;color:#800040;">P</span>
<span class="t" style="left:804.53px;top:318.00px;font:bold 12px/14px 'Liberation Sans',sans-serif;color:#800040;">L</span>
<span class="t" style="left:803.53px;top:331.00px;font:bold 12px/14px 'Liberation Sans',sans-serif;color:#800040;">O</span>
<span class="t" style="left:804.53px;top:344.00px;font:bold 12px/14px 'Liberation Sans',sans-serif;color:#800040;">T</span>
<span class="t" style="left:824.70px;top:301.00px;font:bold 12px/14px 'Liberation Sans',sans-serif;color:#74001e;transform-origin:0 0;transform:scaleX(0.9981);">Scale</span>
<span class="t" style="left:824.70px;top:327.00px;font:bold 12px/14px 'Liberation Sans',sans-serif;color:#74001e;transform-origin:0 0;transform:scaleX(0.9620);">Size</span>
<span class="t" style="left:825.60px;top:353.00px;font:bold 12px/14px 'Liberation Sans',sans-serif;color:#74001e;transform-origin:0 0;transform:scaleX(1.0008);">Scroll&nbsp;range&nbsp;x1.25</span>
<div class="a" style="left:936px;top:353px;width:13px;height:13px;background:#fff;border:1px solid #333;"></div>
<div class="a" style="left:863px;top:298px;width:269px;height:19px;background:#fffacd;"></div>
<div class="a" style="left:868px;top:303px;width:258px;height:4px;background:#e7eaea;border:1px solid #d6d6d6;"></div>
<svg width="1159" height="843"><rect x="871.0" y="313" width="1" height="3" fill="#c4c4c4"/><rect x="883.6" y="313" width="1" height="3" fill="#c4c4c4"/><rect x="896.2" y="313" width="1" height="3" fill="#c4c4c4"/><rect x="908.8" y="313" width="1" height="3" fill="#c4c4c4"/><rect x="921.4" y="313" width="1" height="3" fill="#c4c4c4"/><rect x="934.0" y="313" width="1" height="3" fill="#c4c4c4"/><rect x="946.6" y="313" width="1" height="3" fill="#c4c4c4"/><rect x="959.2" y="313" width="1" height="3" fill="#c4c4c4"/><rect x="971.8" y="313" width="1" height="3" fill="#c4c4c4"/><rect x="984.4" y="313" width="1" height="3" fill="#c4c4c4"/><rect x="997.0" y="313" width="1" height="3" fill="#c4c4c4"/><rect x="1009.6" y="313" width="1" height="3" fill="#c4c4c4"/><rect x="1022.2" y="313" width="1" height="3" fill="#c4c4c4"/><rect x="1034.8" y="313" width="1" height="3" fill="#c4c4c4"/><rect x="1047.4" y="313" width="1" height="3" fill="#c4c4c4"/><rect x="1060.0" y="313" width="1" height="3" fill="#c4c4c4"/><rect x="1072.6" y="313" width="1" height="3" fill="#c4c4c4"/><rect x="1085.2" y="313" width="1" height="3" fill="#c4c4c4"/><rect x="1097.8" y="313" width="1" height="3" fill="#c4c4c4"/><rect x="1110.4" y="313" width="1" height="3" fill="#c4c4c4"/><rect x="1123.0" y="313" width="1" height="3" fill="#c4c4c4"/><rect x="1123" y="312" width="1" height="5" fill="#a0a0a0"/><path d="M989 301h6v7l-3 3l-3-3z" fill="#0078d7"/></svg>
<div class="a" style="left:854px;top:323px;width:163px;height:23px;background:#f0fff0;border-style:solid;border-width:2px 1px 1px 2px;border-color:#696969 #e3e3e3 #e3e3e3 #696969;"></div>
<svg width="1159" height="843"><circle cx="870.2" cy="334.5" r="6" fill="#fff" stroke="#333" stroke-width="1"/><circle cx="870.2" cy="334.5" r="3.2" fill="#333"/></svg>
<span class="t" style="left:882.90px;top:328.00px;font:bold 12px/14px 'Liberation Sans',sans-serif;color:#74001e;transform-origin:0 0;transform:scaleX(0.9048);">normal</span>
<svg width="1159" height="843"><circle cx="934.2" cy="334.5" r="6" fill="#fff" stroke="#333" stroke-width="1"/></svg>
<span class="t" style="left:946.80px;top:328.00px;font:bold 12px/14px 'Liberation Sans',sans-serif;color:#74001e;transform-origin:0 0;transform:scaleX(1.0311);">x&nbsp;2</span>
<svg width="1159" height="843"><circle cx="978.4" cy="334.5" r="6" fill="#fff" stroke="#333" stroke-width="1"/></svg>
<span class="t" style="left:990.80px;top:328.00px;font:bold 12px/14px 'Liberation Sans',sans-serif;color:#74001e;transform-origin:0 0;transform:scaleX(1.0730);">x&nbsp;5</span>
<span class="t" style="left:1039.80px;top:328.00px;font:bold 12px/14px 'Liberation Sans',sans-serif;color:#800080;transform-origin:0 0;transform:scaleX(0.9383);">Form&nbsp;opacity</span>
<div class="a" style="left:1018px;top:346px;width:115px;height:21px;background:#fffacd;"></div>
<div class="a" style="left:1024px;top:352px;width:102px;height:4px;background:#e7eaea;border:1px solid #d6d6d6;"></div>
<svg width="1159" height="843"><rect x="1028" y="363" width="1" height="3" fill="#c4c4c4"/><rect x="1047" y="363" width="1" height="3" fill="#c4c4c4"/><rect x="1066" y="363" width="1" height="3" fill="#c4c4c4"/><rect x="1084" y="363" width="1" height="3" fill="#c4c4c4"/><rect x="1103" y="363" width="1" height="3" fill="#c4c4c4"/><rect x="1122" y="363" width="1" height="4" fill="#a0a0a0"/><path d="M1118 348h8v9l-4 3.5l-4-3.5z" fill="#0078d7"/></svg>
<span class="t" style="left:810.40px;top:382.00px;font:12px/14px 'Liberation Sans',sans-serif;color:#000;transform-origin:0 0;transform:scaleX(0.8795);-webkit-text-stroke:0.2px #000;">RMS&nbsp;fit&nbsp;0.0&nbsp;±0.0&nbsp;km</span>
<div class="a" style="left:802px;top:402px;width:327px;height:395px;background:#fff;border-style:solid;border-width:2px 1px 1px 2px;border-color:#828282 #e3e3e3 #e3e3e3 #828282;overflow:hidden;"></div>
<div class="a" style="left:809px;top:410px;width:66px;height:2px;background:#4b0082;"></div>
<div class="a" style="left:809px;top:422px;width:66px;height:2px;background:#ff0000;"></div>
<div class="a" style="left:809px;top:434px;width:66px;height:2px;background:#0000ff;"></div>
<svg width="1159" height="843"><circle cx="811.6" cy="447.5" r="1.1" fill="none" stroke="#ff69b4" stroke-width="0.8"/><circle cx="826.6" cy="447.5" r="1.1" fill="none" stroke="#ff69b4" stroke-width="0.8"/><circle cx="841.5" cy="447.5" r="1.1" fill="none" stroke="#ff69b4" stroke-width="0.8"/><circle cx="856.5" cy="447.5" r="1.1" fill="none" stroke="#ff69b4" stroke-width="0.8"/><circle cx="871.4" cy="447.5" r="1.1" fill="none" stroke="#ff69b4" stroke-width="0.8"/></svg>
<div class="a" style="left:804px;top:404px;width:324.5px;height:376px;overflow:hidden;"><span class="t" style="left:93.0px;top:2px;font:11.5px/13px 'Liberation Mono',monospace;transform-origin:0 0;transform:scaleX(1.1971);color:#000">1&nbsp;&nbsp;&nbsp;&nbsp;R&nbsp;Langersek,&nbsp;near&nbsp;Brisbane</span><span class="t" style="left:93.0px;top:14px;font:11.5px/13px 'Liberation Mono',monospace;transform-origin:0 0;transform:scaleX(1.1971);color:#000">2&nbsp;&nbsp;&nbsp;&nbsp;J&nbsp;Broughton,&nbsp;near&nbsp;Miami</span><span class="t" style="left:93.0px;top:26px;font:11.5px/13px 'Liberation Mono',monospace;transform-origin:0 0;transform:scaleX(1.1971);color:#000">3(M)&nbsp;J&nbsp;Broughton,&nbsp;near&nbsp;Reedy</span><span class="t" style="left:93.0px;top:38px;font:11.5px/13px 'Liberation Mono',monospace;transform-origin:0 0;transform:scaleX(1.1971);color:#000">4(P)&nbsp;Predicted</span></div>
<div class="a" style="left:804px;top:780px;width:324px;height:16px;background:#f0f0f0;"></div>
<div class="a" style="left:821px;top:780px;width:217px;height:15px;background:#cdcdcd;"></div>
<svg width="1159" height="843"><g fill="none" stroke="#505050" stroke-width="2.1"><path d="M814.1 784.5L810.2 787.5L814.1 790.5"/><path d="M1117.8999999999999 784.5L1121.8 787.5L1117.8999999999999 790.5"/></g></svg>
</body></html>
